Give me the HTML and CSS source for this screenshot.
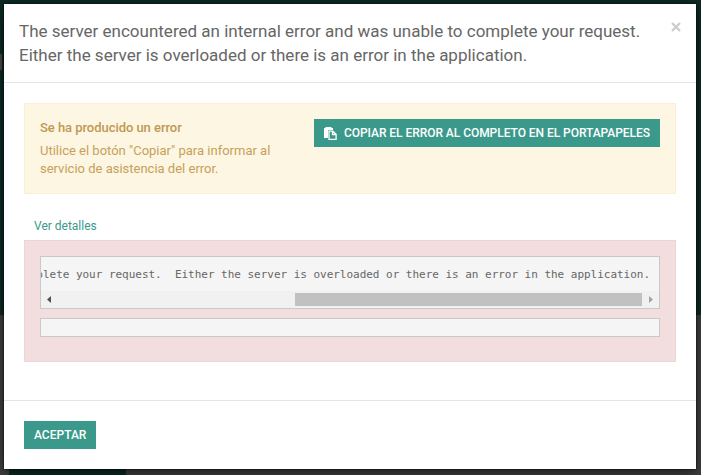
FILE: index.html
```html
<!DOCTYPE html>
<html lang="es">
<head>
<meta charset="utf-8">
<title>Error</title>
<link rel="stylesheet" href="styles.css">
</head>
<body>
<div class="backdrop" aria-hidden="true">
  <div class="backdrop-top"><div class="backdrop-handle"></div></div>
  <div class="backdrop-bottom"><div class="backdrop-tab"></div></div>
</div>
<div class="dialog" role="dialog">
  <header class="dialog-header">
    <h4 class="title">The server encountered an internal error and was unable to complete your request.<br>Either the server is overloaded or there is an error in the application.</h4>
    <button class="close" aria-label="close"><svg width="10" height="10" viewBox="0 0 10 10"><path d="M1 1l8 8M9 1L1 9" stroke="#ccc" stroke-width="2.3"/></svg></button>
  </header>
  <main class="dialog-body">
    <section class="alert warning">
      <div class="message">
        <b class="lead">Se ha producido un error</b>
        <p>Utilice el botón "Copiar" para informar al servicio de asistencia del error.</p>
      </div>
      <button class="btn copy"><svg class="icon" width="13" height="13" viewBox="0 0 13 13"><path fill="#fff" d="M0 1h1.500V0h6v1H9v2H4v8H0z"/><path fill="none" stroke="#fff" stroke-width="1.300" d="M5 4.200h3.800l3.300 3v5.100H5zM8.500 4.200v3.300h3.600"/></svg><span class="copy-label">COPIAR EL ERROR AL COMPLETO EN EL PORTAPAPELES</span></button>
    </section>
    <a class="details">Ver detalles</a>
    <section class="alert danger">
      <div class="trace">
        <pre class="line">The server encountered an internal error and was unable to complete your request.  Either the server is overloaded or there is an error in the application.</pre>
        <div class="scrollbar">
          <svg width="17" height="17"><path d="M10 5v7L6 8.500z" fill="#505050"/></svg>
          <div class="track"><div class="thumb"></div></div>
          <svg width="17" height="17"><path d="M7 5v7l4-3.500z" fill="#a3a3a3"/></svg>
        </div>
      </div>
      <div class="trace empty"></div>
    </section>
  </main>
  <footer class="dialog-footer"><button class="btn accept">ACEPTAR</button></footer>
</div>
</body>
</html>
```
FILE: styles.css
```css
* { box-sizing: border-box; }
body {
  margin: 0;
  width: 701px;
  height: 475px;
  padding: 4px 5px 6px 4px;
  overflow: hidden;
  font: 13px/18px Roboto, "Liberation Sans", sans-serif;
  color: #666;
}
button { border: 0; padding: 0; font-family: inherit; }
.backdrop {
  position: absolute;
  inset: 0;
  z-index: -1;
  display: flex;
  flex-direction: column;
}
.backdrop-top { height: 315px; padding-top: 54px; background: #0c2a25; }
.backdrop-handle { width: 2px; height: 16px; background: #4a4a4a; }
.backdrop-bottom {
  flex: 1;
  display: flex;
  align-items: flex-end;
  padding-left: 9px;
  background: #404040;
}
.backdrop-tab { width: 117px; height: 20px; background: #0c2a25; }
.dialog {
  display: flex;
  flex-direction: column;
  height: 465px;
  background: #fff;
  box-shadow: 0 5px 15px rgba(0, 0, 0, .5), 0 0 2px #000;
}
.dialog-header {
  display: flex;
  justify-content: space-between;
  height: 79px;
  padding: 15px 15px 0;
  border-bottom: 1px solid #e5e5e5;
}
.title { margin: 0; font-size: 17px; line-height: 24px; font-weight: 400; white-space: nowrap; }
.close { width: 10px; height: 10px; margin-top: 3px; background: none; }
.close svg { display: block; }
.dialog-body { flex: 1; padding: 20px 20px 0; }
.alert { border: 1px solid; padding: 15px; }
.warning {
  display: flex;
  justify-content: space-between;
  align-items: flex-start;
  height: 91px;
  background: #fdf6e2;
  border-color: #fbeed3;
  color: #c7a05a;
}
.message { width: 245px; }
.lead { display: block; font-weight: 500; letter-spacing: -.05px; color: #c09853; }
.message p { margin: 5px 0 0; }
.btn {
  display: inline-flex;
  align-items: center;
  height: 28px;
  padding: 0 10px;
  background: #3a998a;
  color: #fff;
  font-size: 12px;
  font-weight: 500;
  white-space: nowrap;
}
.copy { letter-spacing: -.044px; }
.icon { margin-right: 7px; }
.details { display: block; margin: 23px 0 5px 10px; font-size: 12px; color: #3a998a; }
.danger { height: 122px; background: #f2dede; border-color: #eed3d7; }
.trace { height: 53px; border: 1px solid #c9c9c9; background: #f5f5f5; overflow: hidden; }
.line {
  display: flex;
  justify-content: flex-end;
  height: 34px;
  margin: 0;
  padding: 9px 9px 0 0;
  font: 11px/18px "DejaVu Sans Mono", monospace;
  letter-spacing: -.024px;
}
.scrollbar { display: flex; align-items: center; height: 17px; background: #f1f1f1; }
.track { flex: 1; display: flex; justify-content: flex-end; }
.thumb { width: 347px; height: 13px; background: #c1c1c1; }
.empty { height: 19px; margin-top: 9px; }
.dialog-footer { height: 69px; padding: 20px; border-top: 1px solid #e5e5e5; }
```
